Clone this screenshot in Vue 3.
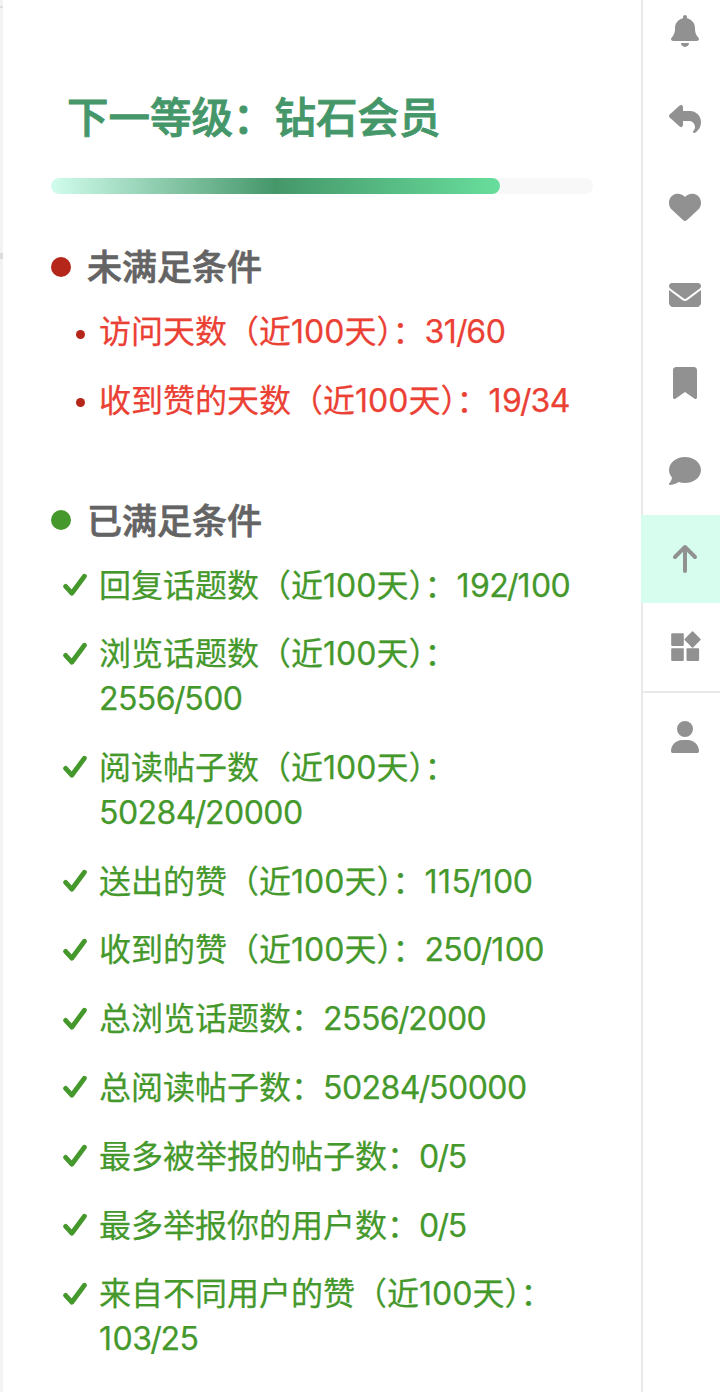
<template>
  <div class="pagina">
    <div class="borda-fundo"></div>

    <main class="painel">
      <h2 class="titulo">下一等级：钻石会员</h2>

      <div class="barra">
        <div class="barra-valor" :style="{ width: progresso + '%' }"></div>
      </div>

      <section
        v-for="grupo in grupos"
        :key="grupo.titulo"
        class="grupo"
        :class="grupo.ok ? 'grupo-ok' : 'grupo-pendente'"
      >
        <h3 class="grupo-titulo">
          <span class="bolinha"></span>
          <span class="grupo-nome">{{ grupo.titulo }}</span>
        </h3>
        <ul class="lista">
          <li v-for="item in grupo.itens" :key="item.nome" class="item">
            <span class="marcador">
              <svg v-if="grupo.ok" class="check" viewBox="0 0 24 24">
                <path d="M2.6 13.4 L8.8 20.2 L21.4 3.2" />
              </svg>
              <span v-else class="ponto"></span>
            </span>
            <span class="texto">{{ item.nome }}：<span class="valor"><span
              v-for="(parte, i) in partes(item.valor)"
              :key="i"
              :class="{ um: parte === '1', traco: parte === '/' }"
            >{{ parte }}</span></span></span>
          </li>
        </ul>
      </section>
    </main>

    <nav class="lateral">
      <button
        v-for="aba in abas"
        :key="aba.id"
        class="aba"
        :class="{ 'aba-ativa': abaAtiva === aba.id, 'aba-perfil': aba.id === 'user' }"
        :title="aba.id"
        @click="abaAtiva = aba.id"
      >
        <svg class="icone" :viewBox="aba.box"><path :d="aba.d" /></svg>
      </button>
    </nav>
  </div>
</template>

<script setup>
import { ref } from "vue";

const progresso = 82.8;
const abaAtiva = ref("arrow-up");

// O "1" e a barra têm espaçamento próprio
const partes = (valor) => valor.split(/([1/])/).filter(Boolean);

const grupos = [
  {
    titulo: "未满足条件",
    ok: false,
    itens: [
      { nome: "访问天数（近100天）", valor: "31/60" },
      { nome: "收到赞的天数（近100天）", valor: "19/34" },
    ],
  },
  {
    titulo: "已满足条件",
    ok: true,
    itens: [
      { nome: "回复话题数（近100天）", valor: "192/100" },
      { nome: "浏览话题数（近100天）", valor: "2556/500" },
      { nome: "阅读帖子数（近100天）", valor: "50284/20000" },
      { nome: "送出的赞（近100天）", valor: "115/100" },
      { nome: "收到的赞（近100天）", valor: "250/100" },
      { nome: "总浏览话题数", valor: "2556/2000" },
      { nome: "总阅读帖子数", valor: "50284/50000" },
      { nome: "最多被举报的帖子数", valor: "0/5" },
      { nome: "最多举报你的用户数", valor: "0/5" },
      { nome: "来自不同用户的赞（近100天）", valor: "103/25" },
    ],
  },
];

const abas = [
  {
    id: "bell",
    box: "-32 0 512 512",
    d: "M224 0c-17.7 0-32 14.3-32 32l0 19.2C119 66 64 130.6 64 208l0 18.8c0 47-17.3 92.4-48.5 127.6l-7.4 8.3c-8.4 9.4-10.4 22.9-5.3 34.4S19.4 416 32 416l384 0c12.6 0 24-7.4 29.2-18.9s3.1-25-5.3-34.4l-7.4-8.3C401.3 319.2 384 273.9 384 226.8l0-18.8c0-77.4-55-142-128-156.8L256 32c0-17.7-14.3-32-32-32zm45.3 493.3c12-12 18.7-28.3 18.7-45.3l-64 0-64 0c0 17 6.7 33.3 18.7 45.3s28.3 18.7 45.3 18.7s33.3-6.7 45.3-18.7z",
  },
  {
    id: "reply",
    box: "0 0 512 512",
    d: "M205 34.8c11.5 5.1 19 16.6 19 29.2v64H336c97.2 0 176 78.8 176 176c0 113.3-81.5 163.9-100.2 174.1c-2.5 1.4-5.3 1.9-8.1 1.9c-10.9 0-19.7-8.9-19.7-19.7c0-7.5 4.3-14.4 9.8-19.5c9.4-8.8 22.2-26.4 22.2-56.7c0-53-43-96-96-96H224v64c0 12.6-7.4 24.1-19 29.2s-25 3-34.4-5.4l-160-144C3.9 225.7 0 217.1 0 208s3.9-17.7 10.6-23.8l160-144c9.4-8.5 22.9-10.6 34.4-5.4z",
  },
  {
    id: "heart",
    box: "0 0 512 512",
    d: "M47.6 300.4L228.3 469.1c7.5 7 17.4 10.9 27.7 10.9s20.2-3.9 27.7-10.9L464.4 300.4c30.4-28.3 47.6-68 47.6-109.5v-5.8c0-69.9-50.5-129.5-119.4-141C347 36.5 300.6 51.4 268 84L256 96 244 84c-32.6-32.6-79-47.5-124.6-39.9C50.5 55.6 0 115.2 0 185.1v5.8c0 41.5 17.2 81.2 47.6 109.5z",
  },
  {
    id: "envelope",
    box: "0 0 512 512",
    d: "M48 64C21.5 64 0 85.5 0 112c0 15.1 7.1 29.3 19.2 38.4L236.8 313.6c11.4 8.5 27 8.5 38.4 0L492.8 150.4c12.1-9.1 19.2-23.3 19.2-38.4c0-26.5-21.5-48-48-48H48zM0 176V384c0 35.3 28.7 64 64 64H448c35.3 0 64-28.7 64-64V176L294.4 339.2c-22.8 17.1-54 17.1-76.8 0L0 176z",
  },
  {
    id: "bookmark",
    box: "-64 0 512 512",
    d: "M0 48V487.7C0 501.1 10.9 512 24.3 512c5 0 9.9-1.5 14-4.4L192 400 345.7 507.6c4.1 2.9 9 4.4 14 4.4c13.4 0 24.3-10.9 24.3-24.3V48c0-26.5-21.5-48-48-48H48C21.5 0 0 21.5 0 48z",
  },
  {
    id: "comment",
    box: "0 0 512 512",
    d: "M512 240c0 114.9-114.6 208-256 208c-37.1 0-72.3-6.4-104.1-17.9c-11.9 8.7-31.3 20.6-54.3 30.6C73.6 471.1 44.7 480 16 480c-6.5 0-12.3-3.9-14.8-9.9c-2.5-6-1.1-12.8 3.4-17.4l.3-.3c.3-.3 .7-.7 1.3-1.4c1.1-1.2 2.8-3.1 4.9-5.7c4.1-5 9.6-12.4 15.2-21.6c10-16.6 19.5-38.4 21.4-62.9C17.7 326.8 0 285.1 0 240C0 125.1 114.6 32 256 32s256 93.1 256 208z",
  },
  {
    id: "arrow-up",
    box: "-64 0 512 512",
    d: "M214.6 41.4c-12.5-12.5-32.8-12.5-45.3 0l-160 160c-12.5 12.5-12.5 32.8 0 45.3s32.8 12.5 45.3 0L160 141.2V448c0 17.7 14.3 32 32 32s32-14.3 32-32V141.2L329.4 246.6c12.5 12.5 32.8 12.5 45.3 0s12.5-32.8 0-45.3l-160-160z",
  },
  {
    id: "apps",
    box: "0 0 32 32",
    d: "M3 2.3h11a.8.8 0 0 1 .8.8v11a.8.8 0 0 1-.8.8h-11a.8.8 0 0 1-.8-.8v-11a.8.8 0 0 1 .8-.8zM3 17.3h11a.8.8 0 0 1 .8.8v11a.8.8 0 0 1-.8.8h-11a.8.8 0 0 1-.8-.8v-11a.8.8 0 0 1 .8-.8zM18.3 17.3h11a.8.8 0 0 1 .8.8v11a.8.8 0 0 1-.8.8h-11a.8.8 0 0 1-.8-.8v-11a.8.8 0 0 1 .8-.8zM24.1.5l7.4 7.4a.8.8 0 0 1 0 1.1l-7.4 7.4a.8.8 0 0 1-1.1 0l-7.4-7.4a.8.8 0 0 1 0-1.1l7.4-7.4a.8.8 0 0 1 1.1 0z",
  },
  {
    id: "user",
    box: "-32 0 512 512",
    d: "M224 256A128 128 0 1 0 224 0a128 128 0 1 0 0 256zm-45.7 48C79.8 304 0 383.8 0 482.3C0 498.7 13.3 512 29.7 512H418.3c16.4 0 29.7-13.3 29.7-29.7C448 383.8 368.2 304 269.7 304H178.3z",
  },
];
</script>

<style>
body {
  margin: 0;
  background: #fff;
}
</style>

<style scoped>
.pagina {
  display: flex;
  width: 720px;
  height: 1392px;
  overflow: hidden;
  background: #fff;
  font-family: Inter, "Noto Sans CJK SC", sans-serif;
}

.borda-fundo {
  width: 3px;
  flex-shrink: 0;
  background: linear-gradient(#dedede, #dedede) 0 6px / 3px 2px no-repeat,
    linear-gradient(#dcdcdc, #dcdcdc) 0 253px / 3px 6px no-repeat, #f3f3f3;
}

.painel {
  width: 542px;
  flex-shrink: 0;
  padding: 0 48px;
}

.titulo {
  margin: 89px 0 0 16px;
  font-size: 41.5px;
  line-height: 58px;
  font-weight: 500;
  -webkit-text-stroke: 0.9px #45976a;
  color: #45976a;
}

.barra {
  height: 16px;
  margin-top: 31px;
  border-radius: 8px;
  background: #f8f8f8;
  overflow: hidden;
}

.barra-valor {
  height: 100%;
  border-radius: 8px;
  background: linear-gradient(90deg, #d1fded, #45976a 50%, #68de9c);
}

.grupo {
  margin-top: 48px;
}

.grupo + .grupo {
  margin-top: 60px;
}

.grupo-titulo {
  display: flex;
  align-items: center;
  gap: 16px;
  margin: 0;
  height: 49px;
  font-size: 35px;
  line-height: 49px;
  font-weight: 500;
  -webkit-text-stroke: 0.7px #646464;
  color: #646464;
}

.grupo-nome {
  padding-top: 2px;
}

.bolinha {
  width: 20px;
  height: 20px;
  border-radius: 50%;
}

.lista {
  margin: 7px 0 0;
  padding: 0;
  list-style: none;
}

.item {
  display: flex;
  padding: 12px 0;
  font-size: 32px;
  line-height: 44.8px;
}

.texto {
  -webkit-text-stroke: 0.25px currentColor;
}

.marcador {
  display: flex;
  align-items: center;
  justify-content: center;
  width: 24px;
  height: 43px;
  margin: 0 12px;
  flex-shrink: 0;
}

.check {
  width: 24px;
  height: 24px;
  fill: none;
  stroke: #45982b;
  stroke-width: 4.8;
  stroke-linecap: round;
  stroke-linejoin: round;
}

.ponto {
  width: 9px;
  height: 9px;
  margin: 5px 0 0 11px;
  border-radius: 50%;
  background: #b5261b;
}

.valor { letter-spacing: -0.55px; }
.um { letter-spacing: 0.5px; }
.traco { margin: 0 -0.6px 0 -1.2px; }

.grupo-pendente .bolinha { background: #b5261b; }
.grupo-pendente .texto { color: #eb4034; }
.grupo-ok .bolinha { background: #45982b; }
.grupo-ok .texto { color: #45982b; }

.lateral {
  display: flex;
  flex-direction: column;
  flex: 1;
  margin-top: -13px;
  border-left: 2px solid #e9e9e9;
}

.aba {
  display: flex;
  align-items: center;
  justify-content: center;
  height: 88px;
  flex-shrink: 0;
  margin: 0;
  padding: 0 0 0 7px;
  border: none;
  background: transparent;
  cursor: pointer;
}

.aba-ativa {
  margin-left: -2px;
  padding-left: 9px;
  background: #d6fdee;
}

.aba-perfil {
  height: 90px;
  border-top: 2px solid #e9e9e9;
}

.icone {
  width: 32px;
  height: 32px;
  fill: #919191;
}
</style>
